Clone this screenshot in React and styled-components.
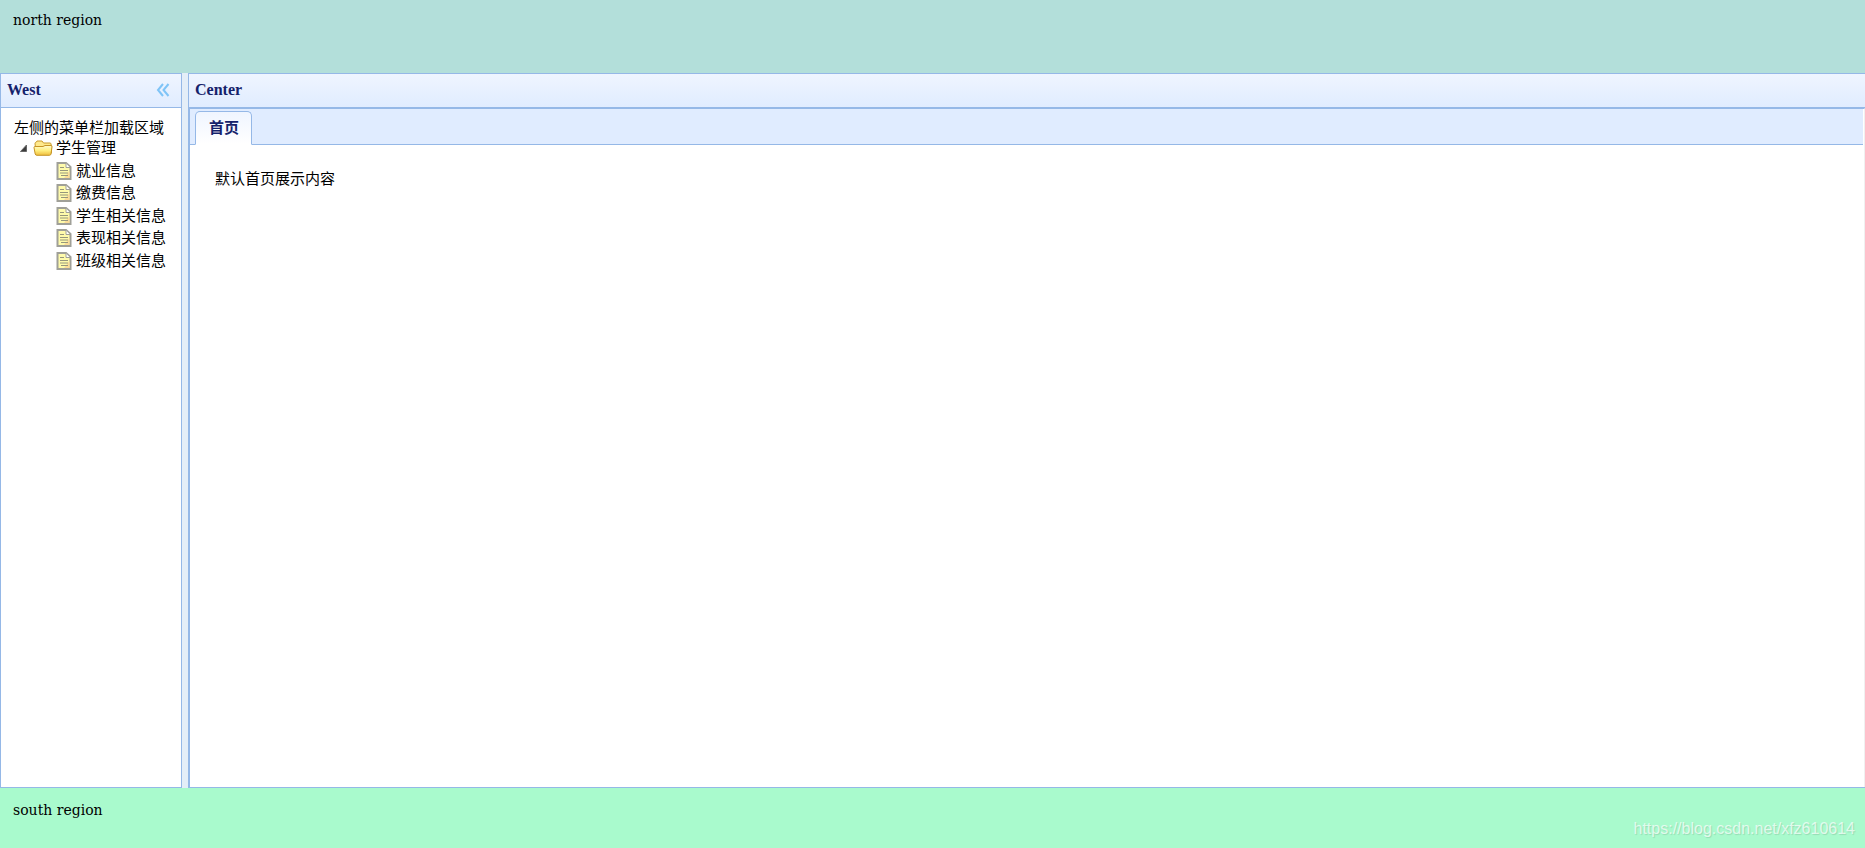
import { useState } from 'react';
import styled, { createGlobalStyle } from 'styled-components';

const GlobalStyle = createGlobalStyle`
  * {
    box-sizing: border-box;
  }

  body {
    margin: 0;
    font-family: 'DejaVu Serif', 'Noto Sans CJK SC', serif;
    font-size: 14px;
    line-height: 20px;
    color: #000;
  }
`;

const Layout = styled.div`
  display: flex;
  flex-direction: column;
  height: 100vh;
  background: #e4eef8;
`;

const North = styled.header`
  height: 73px;
  padding: 10px 13px;
  background: #b3dfda;
`;

const South = styled.footer`
  display: flex;
  justify-content: space-between;
  height: 60px;
  padding: 12px 10px 9px 13px;
  background: #a9facd;
`;

const Watermark = styled.span`
  align-self: flex-end;
  font-family: 'Liberation Sans', sans-serif;
  font-size: 16px;
  color: rgba(255, 255, 255, 0.7);
  text-shadow: 1px 1px 1px rgba(0, 0, 0, 0.12);
`;

const Middle = styled.div`
  display: flex;
  flex: 1;
  gap: 6px;
  min-height: 0;
`;

const West = styled.aside`
  display: flex;
  flex-direction: column;
  width: 182px;
  border: 1px solid #95b8e7;
`;

const Center = styled.main`
  display: flex;
  flex: 1;
  flex-direction: column;
  min-width: 0;
  border: 1px solid #95b8e7;
  border-right: none;
`;

const PanelHeader = styled.div`
  display: flex;
  align-items: center;
  justify-content: space-between;
  height: 34px;
  padding: 0 11px 2px 6px;
  border-bottom: 1px solid #95b8e7;
  background: linear-gradient(to bottom, #eff5ff, #e0ecff);
`;

const PanelTitle = styled.h2`
  margin: 0;
  font-family: 'Liberation Serif', serif;
  font-size: 16px;
  line-height: 20px;
  color: #15226b;
`;

const CollapseButton = styled.button`
  display: flex;
  padding: 0;
  border: none;
  background: none;
  cursor: pointer;
`;

const WestBody = styled.div`
  flex: 1;
  padding: 10px 13px;
  background: #fff;
  font-size: 15px;
  white-space: nowrap;
`;

const Tree = styled.ul`
  display: grid;
  grid-auto-rows: 22px 23px;
  margin: -1px 0 0;
  padding: 0;
  list-style: none;
`;

const TreeNode = styled.li`
  display: flex;
  align-items: center;
  padding-left: ${({ $level }) => ($level ? 42 : 2)}px;
`;

const TreeToggle = styled.button`
  display: flex;
  margin-right: 2px;
  padding: 0;
  border: none;
  background: none;
  cursor: pointer;
`;

const TreeTitle = styled.span`
  margin-left: ${({ $folder }) => ($folder ? 3 : 4)}px;
`;

const CenterBody = styled.div`
  display: flex;
  flex: 1;
  flex-direction: column;
  border-top: 1px solid #95b8e7;
  border-left: 1px solid #95b8e7;
  border-right: 1px solid #f0f0f0;
  padding-right: 1px;
  background: #fff;
`;

const TabBar = styled.div`
  display: flex;
  align-items: flex-end;
  height: 36px;
  padding-left: 5px;
  border-bottom: 1px solid #95b8e7;
  background: #e0ecff;
`;

const Tab = styled.button`
  height: 34px;
  margin-bottom: -1px;
  padding: 0 12px 2px 13px;
  border: 1px solid #95b8e7;
  border-bottom: 1px solid #fff;
  border-radius: 5px 5px 0 0;
  background: linear-gradient(to bottom, #eff5ff, #fff);
  font-family: 'Noto Sans CJK SC', sans-serif;
  font-size: 15px;
  font-weight: 700;
  line-height: 20px;
  color: #15226b;
`;

const TabPanel = styled.div`
  flex: 1;
  padding: 24px 25px;
  font-size: 15px;
`;

const items = [
  '就业信息',
  '缴费信息',
  '学生相关信息',
  '表现相关信息',
  '班级相关信息',
];

function CollapseIcon() {
  return (
    <svg width='14' height='14' viewBox='0 0 14 14' fill='none' stroke='#7fc4f7' strokeWidth='2'>
      <path d='M7 1 L2 7 L7 13 M12.5 1 L7.5 7 L12.5 13' />
    </svg>
  );
}

function ArrowIcon({ open }) {
  return (
    <svg width='15' height='16' viewBox='0 0 15 16'>
      <path
        d={open ? 'M4.5 11.5 L10.5 5 V11.5 Z' : 'M5 4 L10 8 L5 12 Z'}
        fill='#3c3c3c'
        stroke='#666'
        strokeLinejoin='round'
      />
    </svg>
  );
}

function FolderIcon() {
  return (
    <svg width='20' height='18' viewBox='0 0 20 18'>
      <defs>
        <linearGradient id='folder' x1='0' y1='0' x2='0' y2='1'>
          <stop offset='0' stopColor='#fffbd0' />
          <stop offset='0.5' stopColor='#ffef80' />
          <stop offset='1' stopColor='#efbd3c' />
        </linearGradient>
      </defs>
      <path
        d='M3 14 L2 4.5 Q2 3.5 3 3.5 L4 2 H9 L10.5 4 H17 Q18 4 18 5 L18.5 8 V14 Z'
        fill='#ffe98c'
        stroke='#c99a2c'
      />
      <path
        d='M1 8.5 Q1 7.5 2 7.5 H10 L12 6.5 H18 Q19.3 6.5 19 8 L18 15 Q17.7 16.3 16.5 16.3 H4 Q2.5 16.3 2.2 15 Z'
        fill='url(#folder)'
        stroke='#c69426'
      />
    </svg>
  );
}

function FileIcon() {
  return (
    <svg width='16' height='18' viewBox='0 0 16 18'>
      <path d='M1.5 1 H10 L14.5 5 V17 H1.5 Z' fill='#fffbab' stroke='#a0a098' strokeWidth='2' />
      <path d='M8 16 L13.5 9 V16 Z' fill='#fbdc98' />
      <path d='M10 1.5 V5.5 H14' fill='#fff' stroke='#a0a098' />
      <path d='M4 5.5 H8 M4 8.5 H12 M4 11 H12 M5 13.5 H12' stroke='#96967c' />
    </svg>
  );
}

export default function App() {
  const [open, setOpen] = useState(true);

  return (
    <Layout>
      <GlobalStyle />
      <North>north region</North>
      <Middle>
        <West>
          <PanelHeader>
            <PanelTitle>West</PanelTitle>
            <CollapseButton type='button' aria-label='Collapse'>
              <CollapseIcon />
            </CollapseButton>
          </PanelHeader>
          <WestBody>
            左侧的菜单栏加载区域
            <Tree>
              <TreeNode>
                <TreeToggle type='button' aria-label='Toggle' onClick={() => setOpen(!open)}>
                  <ArrowIcon open={open} />
                </TreeToggle>
                <FolderIcon />
                <TreeTitle $folder>学生管理</TreeTitle>
              </TreeNode>
              {open &&
                items.map((item) => (
                  <TreeNode key={item} $level={1}>
                    <FileIcon />
                    <TreeTitle>{item}</TreeTitle>
                  </TreeNode>
                ))}
            </Tree>
          </WestBody>
        </West>
        <Center>
          <PanelHeader>
            <PanelTitle>Center</PanelTitle>
          </PanelHeader>
          <CenterBody>
            <TabBar role='tablist'>
              <Tab type='button' role='tab' aria-selected='true'>
                首页
              </Tab>
            </TabBar>
            <TabPanel role='tabpanel'>默认首页展示内容</TabPanel>
          </CenterBody>
        </Center>
      </Middle>
      <South>
        south region
        <Watermark>https://blog.csdn.net/xfz610614</Watermark>
      </South>
    </Layout>
  );
}
